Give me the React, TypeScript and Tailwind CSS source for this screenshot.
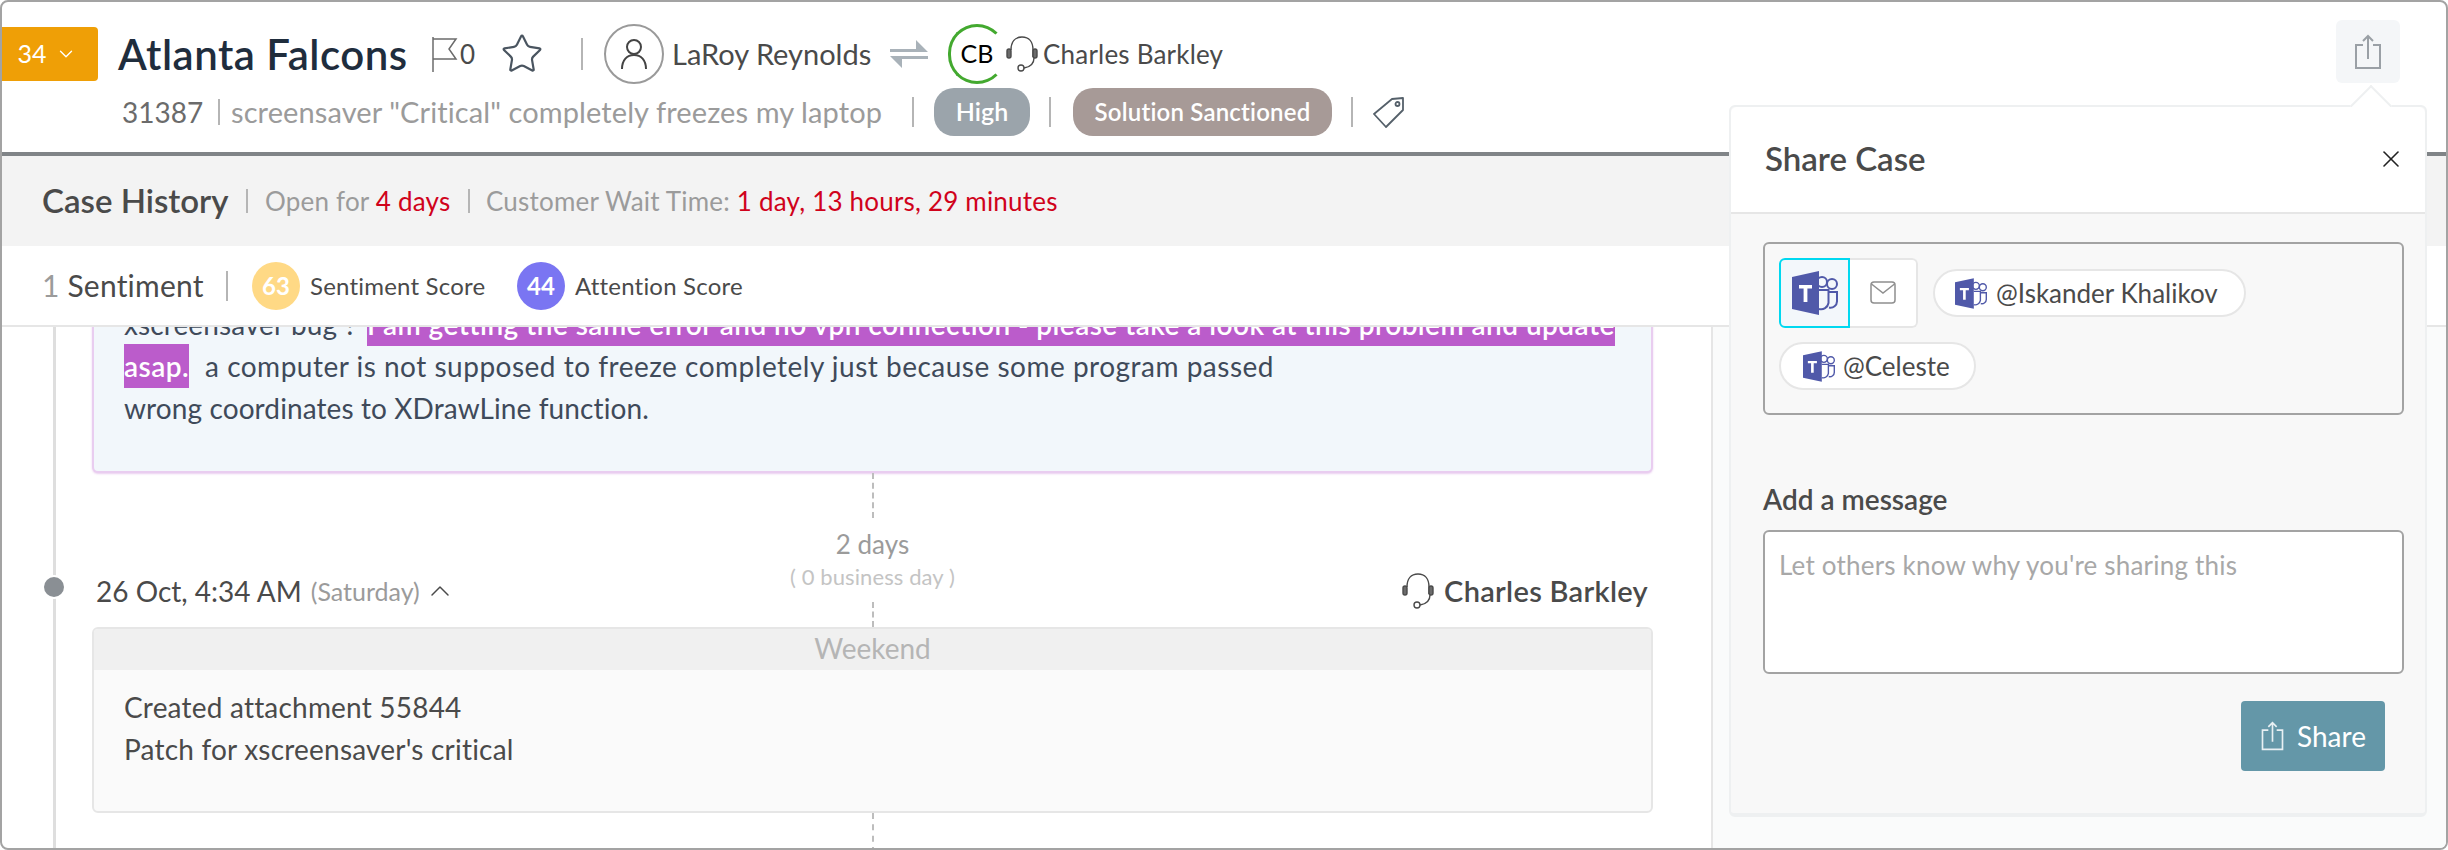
import React from 'react';
import { ChevronDown, ChevronUp, Star, X } from 'lucide-react';

const TeamsIcon = ({ className }: { className: string }) => (
  <svg viewBox="0 0 46 44" className={className} fill="none">
    <path d="M0 6 27 0v44L0 38z" fill="#5059a9" />
    <path d="M7 14h13v3.4h-4.6V31h-3.8V17.4H7z" fill="#fff" />
    <circle cx="30" cy="11" r="5" stroke="#5059a9" strokeWidth="2" />
    <circle cx="40" cy="13" r="5" stroke="#5059a9" strokeWidth="2" />
    <path d="M27 19h9.5v13a7.500 7.500 0 0 1-9.500 6" stroke="#5059a9" strokeWidth="2" />
    <path d="M37 21h8v9a6.500 6.500 0 0 1-8 6.500" stroke="#5059a9" strokeWidth="2" />
  </svg>
);

const MailIcon = () => (
  <svg viewBox="0 0 26 24" className="h-[24px] w-[26px]" fill="none" stroke="#8f8f8f" strokeWidth="1.500">
    <rect x="1" y="1" width="24" height="21" rx="3" />
    <path d="M1.500 3 13 12 24.500 3" />
  </svg>
);

const ShareIcon = ({ className, color }: { className: string; color: string }) => (
  <svg viewBox="0 0 30 36" className={className} fill="none" stroke={color} strokeWidth="2">
    <path d="M10 11H3v23h24V11h-7" />
    <path d="M15 25V2M10 7l5-5 5 5" />
  </svg>
);

const HeadsetIcon = ({ className }: { className: string }) => (
  <svg viewBox="0 0 36 36" className={className} fill="none" stroke="#4a4a4a" strokeWidth="1.400">
    <path d="M7 14C7 6 11 1 18 1s11 5 11 13v7" />
    <rect x="3" y="13" width="4" height="9" rx="2" fill="#6b6b6b" />
    <rect x="29" y="13" width="4" height="9" rx="2" fill="#6b6b6b" />
    <path d="M30 22c0 6-4 9-10 10" />
    <circle cx="17" cy="32" r="3" />
  </svg>
);

const Sep = ({ className }: { className: string }) => <div className={`w-[2px] shrink-0 bg-[#b5b5b5] ${className}`} />;

export default function App() {
  return (
    <div className="relative flex h-[850px] w-[2448px] flex-col overflow-hidden rounded-lg border-2 border-[#a3a3a3] bg-white font-[Lato,sans-serif] text-[#4a4a4a]">
      <header className="h-[154px] shrink-0 border-b-4 border-[#808487] pt-[22px]">
        <div className="flex h-[60px] items-center">
          <div className="flex h-[54px] w-[96px] items-center justify-center gap-[8px] rounded-r bg-[#ef9f06] pr-[6px] text-[25px] text-white">
            34 <ChevronDown size={22} strokeWidth={1.500} />
          </div>
          <h1 className="ml-[20px] w-[288px] whitespace-nowrap text-[42px] font-semibold leading-none tracking-[0.5px] text-[#1f2d3d]">Atlanta Falcons</h1>
          <svg viewBox="0 0 26 36" className="ml-[26px] h-[36px] w-[26px]" fill="none" stroke="#6b6b6b" strokeWidth="1.500">
            <path d="M1 1v35M1 3h23l-7 10 7 10H1" />
          </svg>
          <span className="ml-[2px] w-[16px] text-[26px]">0</span>
          <Star className="ml-[24px]" size={44} strokeWidth={1.200} color="#4a5560" />
          <Sep className="ml-[37px] h-[32px]" />
          <div className="ml-[21px] flex h-[60px] w-[60px] shrink-0 items-center justify-center rounded-full border-2 border-[#9a9a9a]">
            <svg viewBox="0 0 28 32" className="h-[32px] w-[28px]" fill="none" stroke="#444" strokeWidth="2">
              <circle cx="14" cy="9" r="7" />
              <path d="M2 31c0-9 5-14 12-14s12 5 12 14" />
            </svg>
          </div>
          <span className="ml-[8px] w-[200px] whitespace-nowrap text-[29px]">LaRoy Reynolds</span>
          <svg viewBox="0 0 38 28" className="ml-[18px] h-[28px] w-[38px]" fill="#a9b2b9">
            <path d="M0 9h26V0l12 12H0z" />
            <path d="M38 16H0l12 12v-9h26z" />
          </svg>
          <div className="ml-[20px] flex h-[60px] w-[58px] items-center justify-center rounded-full border-[3px] border-[#43a92f] border-r-transparent text-[25px] text-black">
            CB
          </div>
          <HeadsetIcon className="ml-[-2px] h-[36px] w-[36px]" />
          <span className="ml-[3px] whitespace-nowrap text-[26px] tracking-[0.2px]">Charles Barkley</span>
        </div>
        <div className="mt-1 flex h-[48px] items-center pl-[120px]">
          <span className="w-[84px] text-[28px] text-[#6b6b6b]">31387</span>
          <Sep className="ml-[12px] h-[26px]" />
          <span className="ml-[11px] w-[649px] whitespace-nowrap text-[29px] tracking-[0.1px] text-[#9b9b9b]">screensaver "Critical" completely freezes my laptop</span>
          <Sep className="ml-[32px] h-[30px]" />
          <span className="ml-[20px] flex h-[48px] w-[96px] items-center justify-center rounded-[20px] bg-[#9ba4ab] text-[25px] font-semibold text-white">High</span>
          <Sep className="ml-[19px] h-[30px]" />
          <span className="ml-[22px] flex h-[48px] w-[259px] items-center justify-center rounded-[20px] bg-[#a79a97] text-[24px] font-semibold tracking-[0.2px] text-white">Solution Sanctioned</span>
          <Sep className="ml-[19px] h-[30px]" />
          <svg viewBox="0 0 32 32" className="ml-[20px] h-[32px] w-[32px]" fill="none" stroke="#55606a" strokeWidth="1.800">
            <path d="M30 2v12L13 31 1 18 19 3z" strokeLinejoin="round" />
            <circle cx="24.500" cy="8" r="2" />
          </svg>
        </div>
      </header>

      <div className="flex h-[90px] shrink-0 items-center bg-[#f3f3f3] pl-[40px]">
        <span className="w-[188px] whitespace-nowrap text-[33px] font-semibold">Case History</span>
        <Sep className="ml-[16px] h-[24px]" />
        <span className="ml-[17px] w-[187px] whitespace-nowrap text-[26px] tracking-[0.2px] text-[#9b9b9b]">Open for <span className="text-[#d0021b]">4 days</span></span>
        <Sep className="ml-[16px] h-[24px]" />
        <span className="ml-[16px] whitespace-nowrap text-[26px] tracking-[0.2px] text-[#9b9b9b]">Customer Wait Time: <span className="text-[#d0021b]">1 day, 13 hours, 29 minutes</span></span>
      </div>

      <div className="flex h-[81px] shrink-0 items-center border-b-2 border-[#e6e6e6] pl-[40px]">
        <span className="w-[163px] whitespace-nowrap text-[30px] tracking-[0.2px]"><span className="text-[#9b9b9b]">1</span> Sentiment</span>
        <Sep className="ml-[21px] h-[30px]" />
        <span className="ml-[24px] flex h-[48px] w-[48px] items-center justify-center rounded-full bg-[#ffd985] text-[24px] font-bold text-white">63</span>
        <span className="ml-[10px] w-[176px] whitespace-nowrap text-[24px] tracking-[0.2px]">Sentiment Score</span>
        <span className="ml-[31px] flex h-[48px] w-[48px] items-center justify-center rounded-full bg-[#7a75f2] text-[24px] font-bold text-white">44</span>
        <span className="ml-[10px] whitespace-nowrap text-[24px] tracking-[0.2px]">Attention Score</span>
      </div>

      <div className="flex min-h-0 flex-1">
        <main className="relative w-[1711px] shrink-0 overflow-hidden border-r-2 border-[#e6e6e6] pl-[90px] pr-[58px]">
          <div className="absolute bottom-0 left-[51px] top-0 w-[3px] bg-[#dedede]" />
          <div className="-mt-[24px] mb-[0px] rounded-b-md border-2 border-t-0 border-[#e9cdf0] bg-[#f2f7fb] pb-[42px] pl-[30px] text-[28px] leading-[42px] tracking-[0.1px] text-[#3f4a5a] shadow-[0_1px_2px_rgba(187,92,203,0.3)]">
            <span className="mr-[10px]">xscreensaver bug ?</span>
            <mark className="box-decoration-clone bg-[#bb5ccb] py-[5px] font-semibold tracking-[0.45px] text-white">
              I am getting the same error and no vpn connection - please take a look at this problem and update
              <br />
              asap.
            </mark>
            <span className="ml-[16px] tracking-[0.5px]">a computer is not supposed to freeze completely just because some program passed</span>
            <br />
            wrong coordinates to XDrawLine function.
          </div>

          <div className="grid grid-cols-[1fr_auto_1fr]">
            <div className="relative flex items-center self-end pb-[18px] pl-[4px]">
              <div className="absolute -left-[48px] top-[4px] h-[20px] w-[20px] rounded-full bg-[#8a8f94] ring-2 ring-white" />
              <span className="whitespace-nowrap text-[28px] leading-[36px]">26 Oct, 4:34 AM</span>
              <span className="ml-[9px] whitespace-nowrap text-[25px] leading-[36px] text-[#9b9b9b]">(Saturday)</span>
              <ChevronUp className="ml-[4px]" size={32} strokeWidth={1.100} />
            </div>
            <div className="flex flex-col items-center">
              <div className="h-[45px] border-l-2 border-dashed border-[#bdbdbd]" />
              <span className="mt-[10px] text-[26px] leading-[32px] text-[#9b9b9b]">2 days</span>
              <span className="mt-[1px] whitespace-nowrap text-[22px] leading-[32px] tracking-[0.1px] text-[#c4c4c4]">( 0 business day )</span>
              <div className="mt-[9px] h-[25px] border-l-2 border-dashed border-[#bdbdbd]" />
            </div>
            <div className="flex items-center justify-end self-end pb-[18px] pr-[5px]">
              <HeadsetIcon className="h-[36px] w-[36px]" />
              <span className="ml-[8px] whitespace-nowrap text-[29px] font-semibold leading-[36px] tracking-[0.3px]">Charles Barkley</span>
            </div>
          </div>

          <div className="h-[186px] overflow-hidden rounded-md border-2 border-[#e6e6e6] bg-[#fafafa]">
            <div className="flex h-[41px] items-center justify-center bg-[#f0f0f0] pb-[3px] text-[28px] text-[#b5b5b5]">Weekend</div>
            <div className="pl-[30px] pt-[16px] text-[28px] leading-[42px] tracking-[0.2px]">
              <p>Created attachment 55844</p>
              <p>Patch for xscreensaver's critical</p>
            </div>
          </div>
          <div className="mx-auto h-[40px] w-0 border-l-2 border-dashed border-[#bdbdbd]" />
        </main>
        <aside className="flex-1 bg-[#fafbfb]" />
      </div>

      <div className="absolute right-[46px] top-[18px] flex h-[63px] w-[64px] items-center justify-center rounded-md bg-[#f4f6f8]">
        <ShareIcon className="h-[36px] w-[30px]" color="#9aa0a6" />
      </div>

      <section className="absolute left-[1727px] top-[103px] flex h-[712px] w-[698px] flex-col rounded-md border-2 border-b-4 border-[#eef0f1] bg-[#f8f8f8]">
        <div className="absolute -top-[16px] left-[625px] h-[30px] w-[30px] rotate-45 border-l-2 border-t-2 border-[#eef0f1] bg-white" />
        <div className="relative flex h-[107px] shrink-0 items-center justify-between rounded-t-md border-b-2 border-[#e6e6e6] bg-white pb-[2px] pl-[34px] pr-[20px]">
          <h2 className="text-[33px] font-semibold">Share Case</h2>
          <X size={28} strokeWidth={1.400} color="#222" />
        </div>
        <div className="flex flex-col pl-[32px] pr-[21px] pt-[28px]">
          <div className="flex h-[173px] flex-wrap content-start items-center gap-x-[15px] gap-y-[14px] rounded-md border-2 border-[#a3a3a3] px-[14px] pt-[14px]">
            <div className="flex h-[70px] w-[139px] rounded-md bg-white">
              <div className="flex w-[71px] items-center justify-center rounded-l-md border-2 border-[#00d8f0] bg-[#f3f7fb]">
                <TeamsIcon className="h-[44px] w-[46px]" />
              </div>
              <div className="flex flex-1 items-center justify-center rounded-r-md border-2 border-l-0 border-[#e6e6e6]">
                <MailIcon />
              </div>
            </div>
            <div className="flex h-[48px] w-[313px] items-center rounded-full border-2 border-[#e6e6e6] bg-white pl-[20px] text-[26px]">
              <TeamsIcon className="h-[31px] w-[32px]" />
              <span className="ml-[9px] whitespace-nowrap">@Iskander Khalikov</span>
            </div>
            <div className="flex h-[48px] w-[197px] items-center rounded-full border-2 border-[#e6e6e6] bg-white pl-[22px] text-[26px]">
              <TeamsIcon className="h-[31px] w-[32px]" />
              <span className="ml-[8px]">@Celeste</span>
            </div>
          </div>
          <label className="mt-[68px] text-[28px] font-semibold leading-[32px]">Add a message</label>
          <div className="mt-[15px] h-[144px] rounded-md border-2 border-[#a3a3a3] bg-white px-[14px] pt-[17px] text-[26px] leading-[32px] tracking-[0.2px] text-[#a8a8a8]">
            Let others know why you're sharing this
          </div>
          <button className="mr-[19px] mt-[27px] flex h-[70px] w-[144px] items-center justify-center gap-[12px] self-end rounded bg-[#6497a8] text-[28px] text-white">
            <ShareIcon className="h-[32px] w-[25px]" color="#e8f0f3" />
            Share
          </button>
        </div>
      </section>
    </div>
  );
}
